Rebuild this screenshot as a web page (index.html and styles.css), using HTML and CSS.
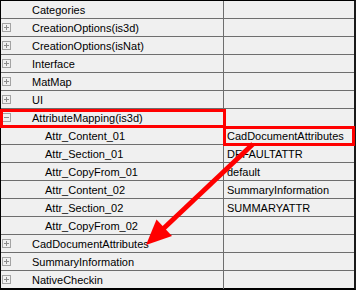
FILE: index.html
```html
<!DOCTYPE html>
<html lang="en">
<head>
    <meta charset="UTF-8">
    <title>Attribute Mapping</title>
    <link rel="stylesheet" href="styles.css">
</head>
<body>
    <div class="grid">
        <div class="row"><div class="name">Categories</div><div class="value"></div></div>
        <div class="row"><div class="name"><span class="toggle">
            <svg width="9" height="9" viewBox="0 0 9 9"><rect x="0.5" y="0.5" width="8" height="8" fill="none" stroke="#a3a3a3"/><path d="M2 4.5h5M4.5 2v5" stroke="#8c8c8c"/></svg>
        </span>CreationOptions(is3d)</div><div class="value"></div></div>
        <div class="row"><div class="name"><span class="toggle">
            <svg width="9" height="9" viewBox="0 0 9 9"><rect x="0.5" y="0.5" width="8" height="8" fill="none" stroke="#a3a3a3"/><path d="M2 4.5h5M4.5 2v5" stroke="#8c8c8c"/></svg>
        </span>CreationOptions(isNat)</div><div class="value"></div></div>
        <div class="row"><div class="name"><span class="toggle">
            <svg width="9" height="9" viewBox="0 0 9 9"><rect x="0.5" y="0.5" width="8" height="8" fill="none" stroke="#a3a3a3"/><path d="M2 4.5h5M4.5 2v5" stroke="#8c8c8c"/></svg>
        </span>Interface</div><div class="value"></div></div>
        <div class="row"><div class="name"><span class="toggle">
            <svg width="9" height="9" viewBox="0 0 9 9"><rect x="0.5" y="0.5" width="8" height="8" fill="none" stroke="#a3a3a3"/><path d="M2 4.5h5M4.5 2v5" stroke="#8c8c8c"/></svg>
        </span>MatMap</div><div class="value"></div></div>
        <div class="row"><div class="name"><span class="toggle">
            <svg width="9" height="9" viewBox="0 0 9 9"><rect x="0.5" y="0.5" width="8" height="8" fill="none" stroke="#a3a3a3"/><path d="M2 4.5h5M4.5 2v5" stroke="#8c8c8c"/></svg>
        </span>UI</div><div class="value"></div></div>
        <div class="row"><div class="name"><span class="toggle">
            <svg width="9" height="9" viewBox="0 0 9 9"><rect x="0.5" y="0.5" width="8" height="8" fill="none" stroke="#a3a3a3"/><path d="M2 4.5h5" stroke="#8c8c8c"/></svg>
        </span>AttributeMapping(is3d)</div><div class="value"></div></div>
        <div class="row"><div class="name child">Attr_Content_01</div><div class="value">CadDocumentAttributes</div></div>
        <div class="row"><div class="name child">Attr_Section_01</div><div class="value">DEFAULTATTR</div></div>
        <div class="row"><div class="name child">Attr_CopyFrom_01</div><div class="value">default</div></div>
        <div class="row"><div class="name child">Attr_Content_02</div><div class="value">SummaryInformation</div></div>
        <div class="row"><div class="name child">Attr_Section_02</div><div class="value">SUMMARYATTR</div></div>
        <div class="row"><div class="name child">Attr_CopyFrom_02</div><div class="value"></div></div>
        <div class="row"><div class="name"><span class="toggle">
            <svg width="9" height="9" viewBox="0 0 9 9"><rect x="0.5" y="0.5" width="8" height="8" fill="none" stroke="#a3a3a3"/><path d="M2 4.5h5M4.5 2v5" stroke="#8c8c8c"/></svg>
        </span>CadDocumentAttributes</div><div class="value"></div></div>
        <div class="row"><div class="name"><span class="toggle">
            <svg width="9" height="9" viewBox="0 0 9 9"><rect x="0.5" y="0.5" width="8" height="8" fill="none" stroke="#a3a3a3"/><path d="M2 4.5h5M4.5 2v5" stroke="#8c8c8c"/></svg>
        </span>SummaryInformation</div><div class="value"></div></div>
        <div class="row"><div class="name"><span class="toggle">
            <svg width="9" height="9" viewBox="0 0 9 9"><rect x="0.5" y="0.5" width="8" height="8" fill="none" stroke="#a3a3a3"/><path d="M2 4.5h5M4.5 2v5" stroke="#8c8c8c"/></svg>
        </span>NativeCheckin</div><div class="value"></div></div>

        <!-- red markup drawn over the grid -->
        <svg class="markup" width="356" height="290" viewBox="0 0 356 290">
            <rect x="1.5" y="110.5" width="223" height="16" fill="none" stroke="#ff0000" stroke-width="3"/>
            <rect x="224.5" y="127.5" width="129" height="17" fill="none" stroke="#ff0000" stroke-width="3"/>
            <line x1="253" y1="144" x2="163" y2="229" stroke="#ff0000" stroke-width="5"/>
            <polygon points="146,245 156.5,219.5 172,236" fill="#ff0000"/>
        </svg>
    </div>
</body>
</html>
```

FILE: styles.css
```css
* {
    margin: 0;
    padding: 0;
    box-sizing: border-box;
}

body {
    background-color: #f0f0f0;
    font-family: "Liberation Sans", Arial, sans-serif;
    font-size: 11px;
    color: #000;
}

.grid {
    width: 356px;
    height: 290px;
    position: relative;
    border-top: 1px solid #000;
    border-left: 1px solid #000;
    border-right: 2px solid #1a1a1a;
    border-bottom: 2px solid #000;
}

.row {
    display: grid;
    grid-template-columns: 223px 1fr;
    height: 18px;
    border-bottom: 1px solid #6e6e6e;
}

.row:last-of-type {
    border-bottom: none;
}

.name {
    display: flex;
    align-items: center;
    padding-left: 31px;
    border-right: 1px solid #6e6e6e;
    white-space: nowrap;
    position: relative;
}

.name.child {
    padding-left: 44px;
}

.toggle {
    position: absolute;
    left: 1px;
    top: 4px;
    width: 9px;
    height: 9px;
    display: flex;
}

.value {
    display: flex;
    align-items: center;
    padding-left: 3px;
    white-space: nowrap;
}

.markup {
    position: absolute;
    left: -1px;
    top: -1px;
    pointer-events: none;
}
```
